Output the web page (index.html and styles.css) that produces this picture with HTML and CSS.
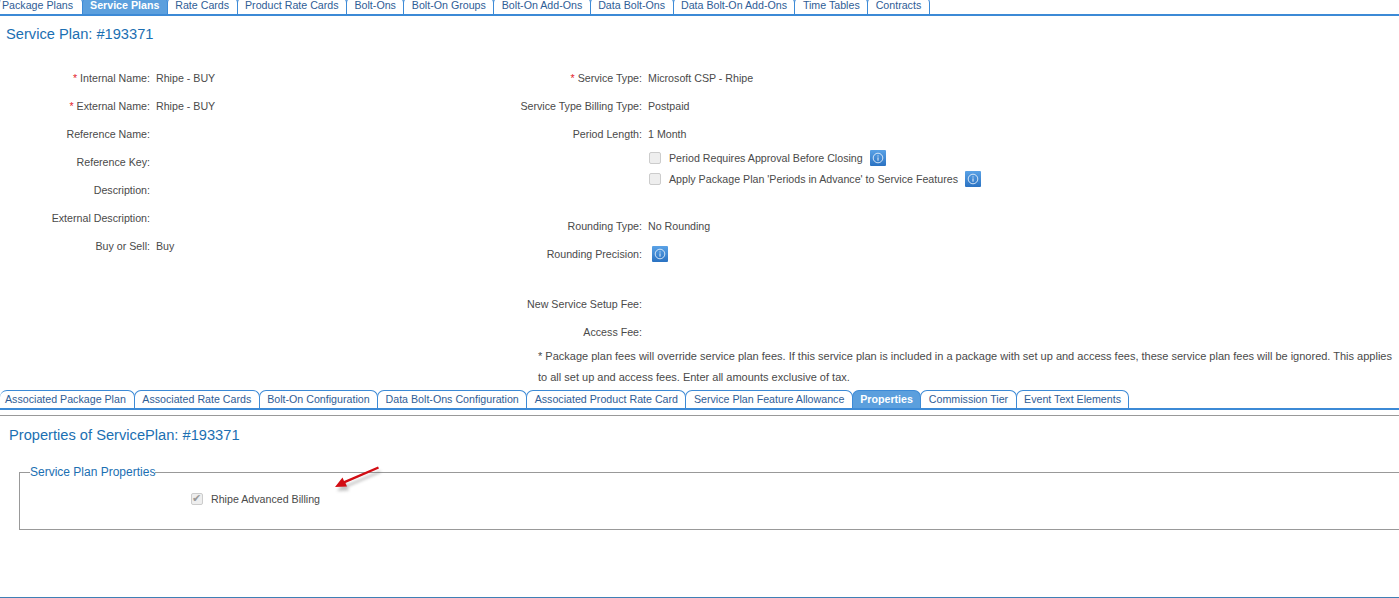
FILE: index.html
```html
<!DOCTYPE html>
<html lang="en">
<head>
<meta charset="utf-8">
<title>Service Plan #193371</title>
<link rel="stylesheet" href="styles.css">
</head>
<body>
<nav class="tabs-clip">
  <ul class="tabs tabs-main">
    <li class="tab tab-first">Package Plans</li>
    <li class="tab active">Service Plans</li>
    <li class="tab">Rate Cards</li>
    <li class="tab">Product Rate Cards</li>
    <li class="tab">Bolt-Ons</li>
    <li class="tab">Bolt-On Groups</li>
    <li class="tab">Bolt-On Add-Ons</li>
    <li class="tab">Data Bolt-Ons</li>
    <li class="tab">Data Bolt-On Add-Ons</li>
    <li class="tab">Time Tables</li>
    <li class="tab">Contracts</li>
  </ul>
</nav>
<h1 class="title">Service Plan: #193371</h1>
<section class="form">
  <div class="col col-left">
    <div class="row"><span class="label"><i class="req">*</i> Internal Name:</span><span class="value">Rhipe - BUY</span></div>
    <div class="row"><span class="label"><i class="req">*</i> External Name:</span><span class="value">Rhipe - BUY</span></div>
    <div class="row"><span class="label">Reference Name:</span></div>
    <div class="row"><span class="label">Reference Key:</span></div>
    <div class="row"><span class="label">Description:</span></div>
    <div class="row"><span class="label">External Description:</span></div>
    <div class="row"><span class="label">Buy or Sell:</span><span class="value">Buy</span></div>
  </div>
  <div class="col col-right">
    <div class="row"><span class="label"><i class="req">*</i> Service Type:</span><span class="value">Microsoft CSP - Rhipe</span></div>
    <div class="row"><span class="label">Service Type Billing Type:</span><span class="value">Postpaid</span></div>
    <div class="row"><span class="label">Period Length:</span><span class="value">1 Month</span></div>
    <div class="checks">
      <div class="check-row"><input type="checkbox" class="check" disabled><span>Period Requires Approval Before Closing</span><span class="info"><svg viewBox="0 0 16 16" width="12" height="12"><circle cx="8" cy="8" r="6.4" fill="none" stroke="#fff" stroke-width="1"/><path d="M8 4.6v1.4M8 7.2v4.4" stroke="#fff" stroke-width="1.2"/></svg></span></div>
      <div class="check-row"><input type="checkbox" class="check" disabled><span>Apply Package Plan 'Periods in Advance' to Service Features</span><span class="info"><svg viewBox="0 0 16 16" width="12" height="12"><circle cx="8" cy="8" r="6.4" fill="none" stroke="#fff" stroke-width="1"/><path d="M8 4.6v1.4M8 7.2v4.4" stroke="#fff" stroke-width="1.2"/></svg></span></div>
    </div>
    <div class="row"><span class="label">Rounding Type:</span><span class="value">No Rounding</span></div>
    <div class="row"><span class="label">Rounding Precision:</span><span class="value value-icon"><span class="info"><svg viewBox="0 0 16 16" width="12" height="12"><circle cx="8" cy="8" r="6.4" fill="none" stroke="#fff" stroke-width="1"/><path d="M8 4.6v1.4M8 7.2v4.4" stroke="#fff" stroke-width="1.2"/></svg></span></span></div>
    <div class="row row-gap"><span class="label">New Service Setup Fee:</span></div>
    <div class="row"><span class="label">Access Fee:</span></div>
    <p class="note">* Package plan fees will override service plan fees. If this service plan is included in a package with set up and access fees, these service plan fees will be ignored. This applies to all set up and access fees. Enter all amounts exclusive of tax.</p>
  </div>
</section>
<ul class="tabs tabs-sub">
  <li class="tab">Associated Package Plan</li>
  <li class="tab">Associated Rate Cards</li>
  <li class="tab">Bolt-On Configuration</li>
  <li class="tab">Data Bolt-Ons Configuration</li>
  <li class="tab">Associated Product Rate Card</li>
  <li class="tab">Service Plan Feature Allowance</li>
  <li class="tab active">Properties</li>
  <li class="tab">Commission Tier</li>
  <li class="tab">Event Text Elements</li>
</ul>
<section class="panel">
  <h2 class="title title-sub">Properties of ServicePlan: #193371</h2>
  <fieldset class="props">
    <legend>Service Plan Properties</legend>
    <label class="prop-row"><input type="checkbox" class="check checked" checked disabled><span>Rhipe Advanced Billing</span></label>
  </fieldset>
  <svg class="arrow" width="60" height="36" viewBox="0 0 60 36" aria-hidden="true">
    <defs><filter id="sh" x="-30%" y="-30%" width="160%" height="180%"><feGaussianBlur stdDeviation="1.6"/></filter></defs>
    <path d="M45 0.5 L46 2.5 L12.5 17 L14 20.5 L2 21 L9.5 11.5 L11 15 Z" transform="translate(2 4)" fill="#777" opacity=".45" filter="url(#sh)"/>
    <path d="M45 0.5 L46 2.5 L12.5 17 L14 20.5 L2 21 L9.5 11.5 L11 15 Z" fill="#d20d14"/>
  </svg>
</section>
```
FILE: styles.css
```css
* { box-sizing: border-box; }
html, body { margin: 0; height: 598px; overflow: hidden; background: #fff; }
body {
  position: relative;
  font-family: "Liberation Sans", Arial, sans-serif;
  font-size: 10.67px;
  color: #4a4a4a;
  border-bottom: 1px solid #3f7fb5;
}
.tabs-clip { height: 16px; overflow: hidden; }
.tabs {
  display: flex;
  list-style: none;
  margin: 0;
  padding: 0;
  border-bottom: 2px solid #3c8ad6;
  line-height: 18px;
}
.tabs-main { margin-top: -4px; height: 20px; }
.tab {
  height: 18px;
  padding: 0 7.45px;
  margin-left: -1px;
  color: #2f5d96;
  background: #fff;
  border: 1px solid #3c8ad6;
  border-bottom: 0;
  border-radius: 7px 7px 0 0;
  line-height: 17px;
  white-space: nowrap;
}
.tab:first-child { margin-left: 0; border-left-width: 0; }
.tab-first { padding-left: 2px; padding-right: 8.5px; }
.tab.active {
  background: #5b9fdd;
  color: #fff;
  font-weight: bold;
}
.title {
  margin: 0;
  font-size: 14.67px;
  line-height: 18px;
  font-weight: normal;
  color: #1b6fb2;
  padding: 9px 0 0 6px;
}
.form { display: flex; height: 347px; padding-top: 21px; }
.col-left { width: 400px; }
.col-right { flex: 1; }
.row { display: flex; height: 28px; align-items: center; line-height: 14px; }
.label { text-align: right; flex: none; }
.col-left .label { width: 150px; }
.col-right .label { width: 242px; }
.value { margin-left: 6px; }
.value-icon { margin-left: 10px; display: flex; }
.req { color: #e3222a; font-style: normal; }
.checks { height: 65px; padding-left: 249px; margin-top: -1px; }
.check-row { display: flex; align-items: center; height: 21px; }
.check-row > span:first-of-type { margin-left: 8px; }
.check {
  appearance: none;
  width: 12px;
  height: 12px;
  margin: 0;
  flex: none;
  background: #eee;
  border: 1px solid #ccc;
  border-radius: 2px;
  position: relative;
}
.checked::after {
  content: "\2714";
  position: absolute;
  left: 0;
  top: -1px;
  font-family: "DejaVu Sans", sans-serif;
  font-size: 11px;
  line-height: 12px;
  color: #9a9a9a;
}
.info {
  width: 16px;
  height: 16px;
  flex: none;
  margin-left: 7px;
  display: flex;
  align-items: center;
  justify-content: center;
  background: linear-gradient(#5aa2e6, #2a72c2);
  border-radius: 1px;
}
.value-icon .info { margin-left: 0; }
.row-gap { margin-top: 22px; }
.note {
  margin: 0 6px 0 138px;
  font-size: 11px;
  line-height: 21px;
}
.tabs-sub { height: 20px; margin-top: 0; }
.tabs-sub .tab:first-child { padding-left: 5px; padding-right: 8px; }
.panel { position: relative; border-top: 2px solid transparent; }
.panel::before {
  content: "";
  display: block;
  height: 1px;
  margin-top: 3px;
  background: #999;
}
.title-sub { padding: 10px 0 0 9px; }
.props {
  margin: 21px -10px 0 19px;
  padding: 0;
  border: 1px solid #999;
  height: 65px;
  min-inline-size: auto;
}
.props legend {
  margin-left: 10px;
  padding: 0;
  font-size: 12px;
  line-height: 14px;
  color: #1b6fb2;
}
.prop-row { display: flex; align-items: center; padding: 14px 0 0 171px; }
.prop-row span { margin-left: 8px; }
.arrow { position: absolute; left: 333px; top: 54px; }
```
